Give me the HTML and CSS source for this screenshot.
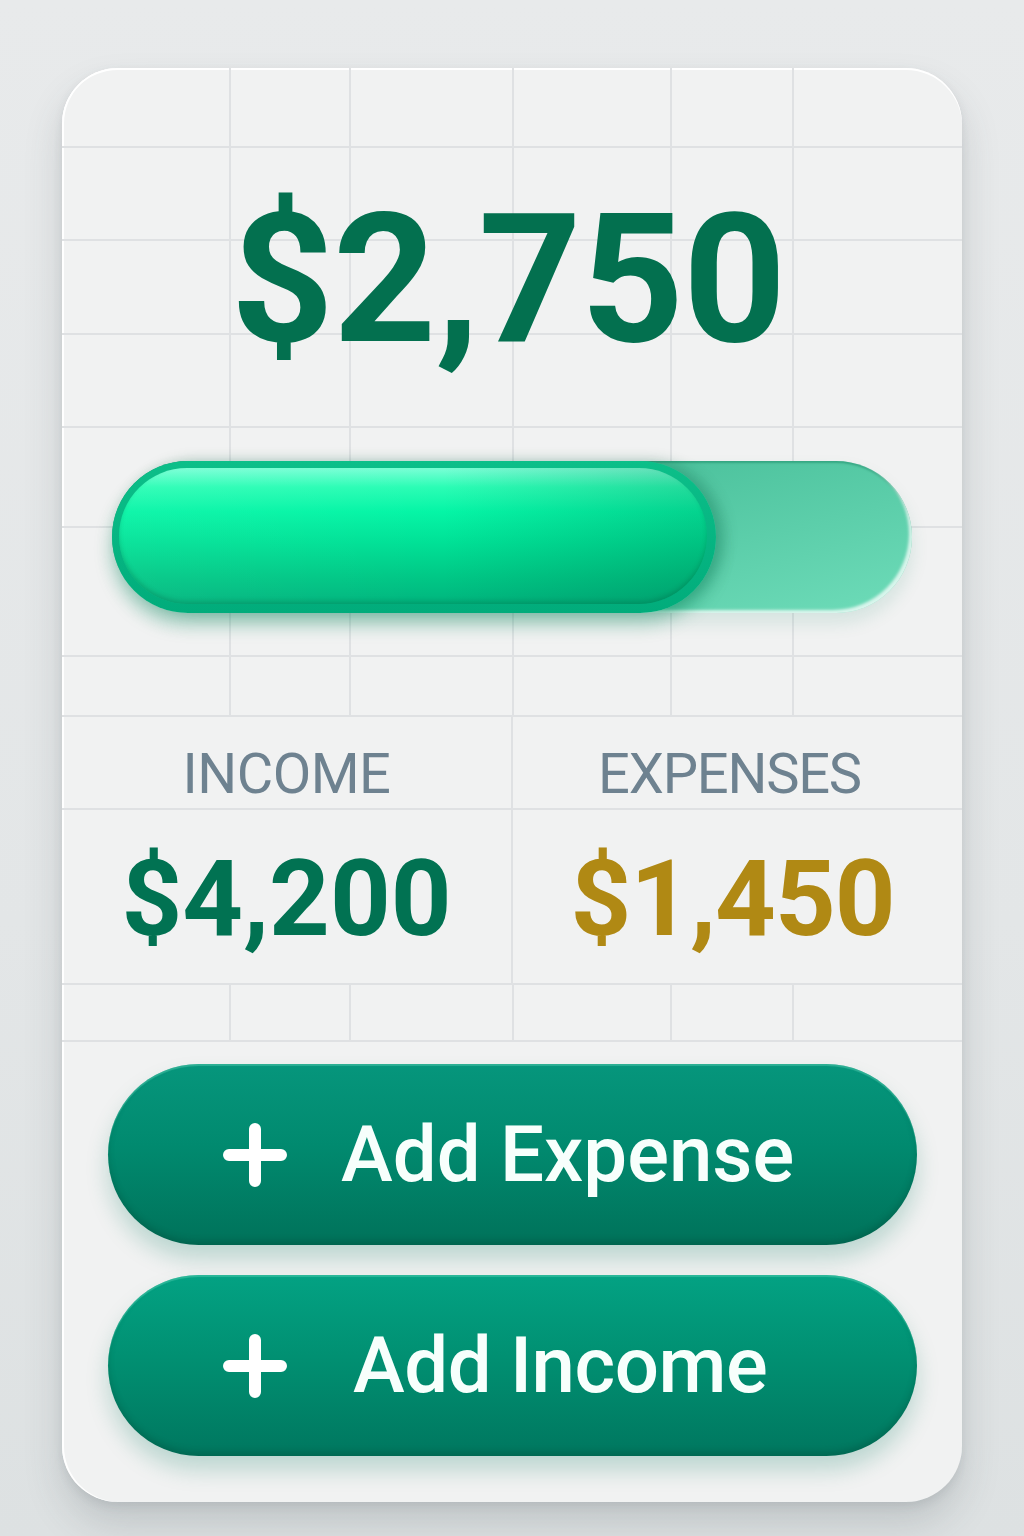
FILE: index.html
```html
<!DOCTYPE html>
<html lang="en">
<head>
<meta charset="utf-8">
<title>Budget</title>
<link rel="stylesheet" href="styles.css">
</head>
<body>
<div class="page">
  <main class="card">
    <section class="hero">
      <div class="balance">$2,750</div>
    </section>
    <section class="progress">
      <div class="track">
        <div class="fill"><div class="fill-core"></div></div>
      </div>
    </section>
    <section class="stats">
      <div class="stat stat-left">
        <div class="stat-label">INCOME</div>
        <div class="stat-value income">$4,200</div>
      </div>
      <div class="stat">
        <div class="stat-label label-right">EXPENSES</div>
        <div class="stat-value expense">$1,450</div>
      </div>
    </section>
    <section class="tiles"></section>
    <section class="actions">
      <button class="btn btn-expense">
        <svg class="plus" width="64" height="64" viewBox="0 0 64 64"><path d="M32 6V58M6 32H58" stroke="#ffffff" stroke-width="12" stroke-linecap="round" fill="none"/></svg>
        <span class="btn-text">Add Expense</span>
      </button>
      <button class="btn btn-income">
        <svg class="plus" width="64" height="64" viewBox="0 0 64 64"><path d="M32 6V58M6 32H58" stroke="#ffffff" stroke-width="12" stroke-linecap="round" fill="none"/></svg>
        <span class="btn-text">Add Income</span>
      </button>
    </section>
  </main>
</div>
</body>
</html>
```
FILE: styles.css
```css
* { box-sizing: border-box; }

html, body {
  margin: 0;
  padding: 0;
}

body {
  font-family: Roboto, "Liberation Sans", Arial, sans-serif;
  background: linear-gradient(180deg, #e8eaeb 0%, #e3e6e7 60%, #dde1e2 100%);
  width: 1024px;
  height: 1536px;
  overflow: hidden;
}

.page {
  padding: 68px 62px 0 62px;
}

.card {
  width: 900px;
  height: 1434px;
  border-radius: 56px;
  background: #f1f2f2;
  overflow: hidden;
  display: flex;
  flex-direction: column;
  box-shadow:
    0 22px 38px rgba(60, 70, 75, 0.18),
    0 4px 10px rgba(60, 70, 75, 0.10),
    inset 0 2px 0 #ffffff,
    inset 2px 0 0 #ffffff;
}

/* ---------- grid decoration ---------- */
.hero {
  height: 360px;
  padding-top: 122px;
  border-bottom: 2px solid #dfe1e3;
  background-image:
    linear-gradient(#dfe1e3, #dfe1e3),
    linear-gradient(#dfe1e3, #dfe1e3),
    linear-gradient(#dfe1e3, #dfe1e3),
    linear-gradient(#dfe1e3, #dfe1e3),
    linear-gradient(#dfe1e3, #dfe1e3),
    linear-gradient(#dfe1e3, #dfe1e3),
    linear-gradient(#dfe1e3, #dfe1e3),
    linear-gradient(#dfe1e3, #dfe1e3);
  background-repeat: no-repeat;
  background-size: 2px 100%, 2px 100%, 2px 100%, 2px 100%, 2px 100%, 100% 2px, 100% 2px, 100% 2px;
  background-position: 167px 0, 287px 0, 450px 0, 608px 0, 730px 0, 0 78px, 0 171px, 0 265px;
}

.balance {
  font-size: 180px;
  line-height: 180px;
  font-weight: 700;
  color: #03704f;
  text-align: center;
  letter-spacing: -1px;
  padding-right: 8px;
}

.progress {
  height: 289px;
  padding: 33px 0 0 50px;
  border-bottom: 2px solid #dfe1e3;
  background-image:
    linear-gradient(#dfe1e3, #dfe1e3),
    linear-gradient(#dfe1e3, #dfe1e3),
    linear-gradient(#dfe1e3, #dfe1e3),
    linear-gradient(#dfe1e3, #dfe1e3),
    linear-gradient(#dfe1e3, #dfe1e3),
    linear-gradient(#dfe1e3, #dfe1e3),
    linear-gradient(#dfe1e3, #dfe1e3);
  background-repeat: no-repeat;
  background-size: 2px 100%, 2px 100%, 2px 100%, 2px 100%, 2px 100%, 100% 2px, 100% 2px;
  background-position: 167px 0, 287px 0, 450px 0, 608px 0, 730px 0, 0 98px, 0 227px;
}

.track {
  width: 800px;
  height: 152px;
  border-radius: 76px;
  display: flex;
  background: linear-gradient(165deg, #33a986 0%, #4fc49f 45%, #6edcb9 100%);
  box-shadow:
    inset -3px -3px 3px rgba(255, 255, 255, 0.75),
    inset 0 2px 2px rgba(0, 110, 75, 0.35),
    0 10px 18px rgba(0, 120, 90, 0.12);
}

.fill {
  width: 604px;
  height: 152px;
  border-radius: 76px;
  padding: 7px 9px 9px 7px;
  background: linear-gradient(180deg, #0cbf89 0%, #01ac7b 100%);
  box-shadow:
    0 12px 18px rgba(0, 140, 95, 0.28),
    8px 0 14px rgba(0, 90, 60, 0.28);
}

.fill-core {
  width: 100%;
  height: 100%;
  border-radius: 70px;
  background-image:
    linear-gradient(90deg, rgba(255, 255, 255, 0.05) 0%, rgba(0, 0, 0, 0) 55%, rgba(0, 70, 45, 0.2) 100%),
    linear-gradient(180deg, #7affd6 0%, #2bfdb5 14%, #05f5a6 32%, #00e196 55%, #00c886 80%, #00b57e 100%);
  box-shadow: inset 0 -3px 4px rgba(0, 90, 60, 0.25);
}

.stats {
  height: 268px;
  display: grid;
  grid-template-columns: 451px 1fr;
  border-bottom: 2px solid #dfe1e3;
}

.stat-left {
  border-right: 2px solid #dfe1e3;
}

.stat-label {
  height: 93px;
  padding-top: 29px;
  border-bottom: 2px solid #dfe1e3;
  font-size: 56px;
  line-height: 56px;
  font-weight: 400;
  color: #6e8290;
  text-align: center;
  letter-spacing: -0.5px;
}

.label-right {
  letter-spacing: -1.2px;
  padding-right: 16px;
}

.stat-value {
  padding-top: 37px;
  font-size: 106px;
  line-height: 105px;
  font-weight: 700;
  text-align: center;
}

.income { color: #017252; }
.expense { color: #b08914; padding-right: 10px; letter-spacing: -1px; }

.tiles {
  height: 57px;
  flex: none;
  border-bottom: 2px solid #dfe1e3;
  background-image:
    linear-gradient(#dfe1e3, #dfe1e3),
    linear-gradient(#dfe1e3, #dfe1e3),
    linear-gradient(#dfe1e3, #dfe1e3),
    linear-gradient(#dfe1e3, #dfe1e3),
    linear-gradient(#dfe1e3, #dfe1e3);
  background-repeat: no-repeat;
  background-size: 2px 100%;
  background-position: 167px 0, 287px 0, 450px 0, 608px 0, 730px 0;
}

.actions {
  display: flex;
  flex-direction: column;
  gap: 30px;
  padding: 22px 45px 0 46px;
}

.btn {
  height: 181px;
  width: 100%;
  border: none;
  border-radius: 91px;
  display: flex;
  align-items: center;
  gap: 54px;
  padding: 0 0 0 115px;
  font-family: Roboto, "Liberation Sans", Arial, sans-serif;
  font-size: 78px;
  line-height: 1;
  font-weight: 500;
  color: #f7fffc;
  cursor: pointer;
}

.btn-expense {
  background: linear-gradient(180deg, #06967c 0%, #018a6f 45%, #00725a 100%);
  box-shadow:
    0 14px 22px rgba(0, 120, 90, 0.22),
    inset 0 2px 1px rgba(120, 230, 200, 0.35),
    inset 0 -4px 6px rgba(0, 60, 45, 0.25);
}

.btn-income {
  background: linear-gradient(180deg, #03a283 0%, #019072 45%, #00775f 100%);
  box-shadow:
    0 14px 22px rgba(0, 120, 90, 0.22),
    inset 0 2px 1px rgba(120, 230, 200, 0.35),
    inset 0 -4px 6px rgba(0, 60, 45, 0.25);
}

.btn-income .btn-text {
  margin-left: 12px;
  letter-spacing: -0.5px;
}

.plus {
  flex: none;
  display: block;
}
```
